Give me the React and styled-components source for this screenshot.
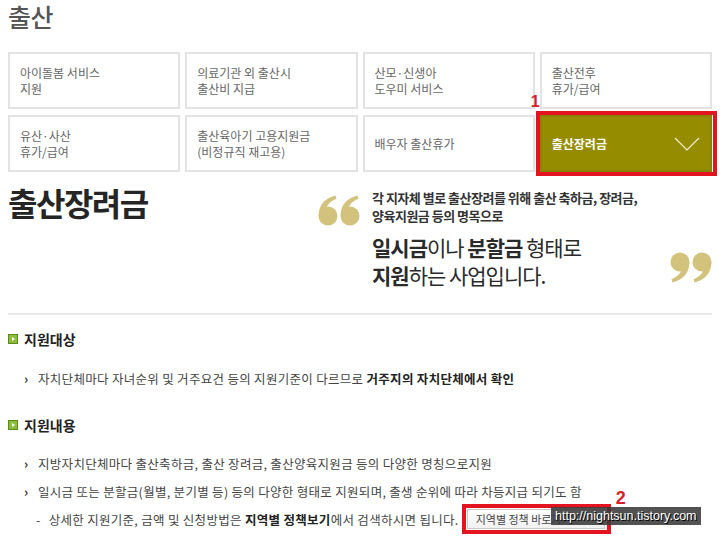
import React from 'react';
import styled, { createGlobalStyle } from 'styled-components';

const GlobalStyle = createGlobalStyle`
  html, body {
    margin: 0;
    padding: 0;
    background: #fff;
  }
  body {
    font-family: 'Noto Sans CJK KR', 'Noto Sans', sans-serif;
    color: #444;
  }
`;

const Page = styled.div`
  position: relative;
  width: 720px;
  height: 541px;
  overflow: hidden;
  padding: 0 8px;
  box-sizing: border-box;
`;

const PageTitle = styled.h1`
  margin: 0 0 20px 0;
  font-size: 25px;
  line-height: 32px;
  font-weight: 500;
  color: #555;
  letter-spacing: -0.5px;
`;

const MenuGrid = styled.div`
  display: grid;
  grid-template-columns: repeat(4, 1fr);
  grid-auto-rows: 57px;
  gap: 6px 5px;
`;

const MenuCard = styled.div`
  position: relative;
  box-sizing: border-box;
  border: 2px solid ${p => (p.active ? '#8a8300' : '#e3e3e3')};
  background: ${p => (p.active ? '#958c00' : '#fff')};
  color: ${p => (p.active ? '#fff' : '#666')};
  font-size: 12px;
  font-weight: ${p => (p.active ? 700 : 400)};
  line-height: 16px;
  padding: 0 10px;
  display: flex;
  align-items: center;
  justify-content: space-between;
`;

const Highlight = styled.div`
  position: absolute;
  inset: -6px -7px -6px -6px;
  border: 4px solid #e3141f;
  pointer-events: none;
`;

const Marker = styled.span`
  position: absolute;
  font-family: 'Liberation Sans', Arial, sans-serif;
  font-weight: 700;
  color: #d8202a;
  font-size: ${p => p.size || 16}px;
  line-height: 1;
  top: ${p => p.top}px;
  left: ${p => p.left}px;
`;

const Intro = styled.div`
  display: flex;
  margin-top: 10px;
  padding-bottom: 24px;
  border-bottom: 2px solid #e8e8e8;
`;

const BigTitle = styled.h2`
  width: 310px;
  flex: none;
  margin: 0;
  font-size: 32px;
  line-height: 40px;
  font-weight: 700;
  color: #252525;
  letter-spacing: -1.5px;
`;

const QuoteBlock = styled.div`
  flex: 1;
  display: flex;
  padding-top: 7px;
`;

const QuoteMark = styled.svg`
  flex: none;
  width: 42px;
  height: 31px;
  margin: ${p => (p.closing ? '63px 0 0 auto' : '6px 12px 0 0')};
  fill: #d2c27b;
`;

const QuoteText = styled.div`
  display: flex;
  flex-direction: column;
`;

const Lead = styled.p`
  margin: 0;
  font-size: 13px;
  line-height: 18px;
  font-weight: 700;
  color: #333;
  letter-spacing: -0.5px;
`;

const Statement = styled.p`
  margin: 8px 0 0 0;
  font-size: 21px;
  line-height: 28px;
  font-weight: 400;
  color: #2a2a2a;
  letter-spacing: -1px;

  b {
    font-weight: 700;
  }
`;

const Section = styled.section`
  margin-top: ${p => p.gap}px;
`;

const SectionHead = styled.h3`
  display: flex;
  align-items: center;
  gap: 6px;
  margin: 0;
  font-size: 14px;
  line-height: 20px;
  font-weight: 700;
  color: #222;
`;

const HeadIcon = styled.span`
  width: 10px;
  height: 10px;
  box-sizing: border-box;
  border: 1px solid #5d8a1c;
  background: #8cbc3c;
  position: relative;

  &::after {
    content: '';
    position: absolute;
    left: 3px;
    top: 2px;
    border-left: 3px solid #fff;
    border-top: 2px solid transparent;
    border-bottom: 2px solid transparent;
  }
`;

const BulletList = styled.ul`
  list-style: none;
  margin: ${p => p.top}px 0 0 0;
  padding: 0 0 0 16px;
`;

const Bullet = styled.li`
  display: flex;
  align-items: center;
  gap: 8px;
  height: 28px;
  font-size: 12.5px;
  color: #444;
  letter-spacing: 0.3px;
  padding-left: ${p => (p.sub ? '12px' : '0')};
  white-space: nowrap;

  b {
    color: #222;
    font-weight: 700;
  }
`;

const Arrow = styled.span`
  width: 6px;
  font-size: 13px;
  font-weight: 700;
  color: #333;
`;

const LinkButton = styled.span`
  position: relative;
  margin-left: 0;
  display: inline-flex;
  align-items: center;
  box-sizing: border-box;
  width: 138px;
  height: 20px;
  padding-left: 8px;
  border: 1px solid #c8c8c8;
  background: linear-gradient(#fff, #f1f1f1);
  font-size: 11px;
  letter-spacing: 0;
  color: #444;
`;

const Watermark = styled.div`
  position: absolute;
  left: 551px;
  top: 507px;
  padding: 0 4px;
  height: 18px;
  line-height: 18px;
  background: rgba(58, 58, 58, 0.88);
  color: #fff;
  font-family: 'Liberation Sans', Arial, sans-serif;
  font-size: 12.5px;
  text-shadow: 1px 1px 0 #000;
`;

const Chevron = () => (
  <svg width="26" height="14" viewBox="0 0 26 14">
    <polyline points="1,1 13,13 25,1" fill="none" stroke="#f3efc8" strokeWidth="1.2" />
  </svg>
);

// one "6" shaped comma: round body with a tail sweeping up to the right
const QuoteGlyph = ({ x }) => (
  <g transform={`translate(${x} 0)`}>
    <circle cx="10" cy="21" r="9.5" />
    <path d="M0.6 21 C0.6 10 7 3 17.5 0.5 L18.5 3.8 C12 6.5 9 10 8.5 14 L4 17 Z" />
  </g>
);

const Quote = ({ closing }) => (
  <QuoteMark closing={closing} viewBox="0 0 42 31" style={closing ? { transform: 'rotate(180deg)' } : undefined}>
    <QuoteGlyph x={0} />
    <QuoteGlyph x={22} />
  </QuoteMark>
);

const menus = [
  ['아이돌봄 서비스', '지원'],
  ['의료기관 외 출산시', '출산비 지급'],
  ['산모·신생아', '도우미 서비스'],
  ['출산전후', '휴가/급여'],
  ['유산·사산', '휴가/급여'],
  ['출산육아기 고용지원금', '(비정규직 재고용)'],
  ['배우자 출산휴가'],
];

export default function App() {
  return (
    <Page>
      <GlobalStyle />
      <PageTitle>출산</PageTitle>
      <MenuGrid>
        {menus.map((lines, idx) => (
          <MenuCard key={idx}>
            <div>
              {lines.map((l, i) => (
                <div key={i}>{l}</div>
              ))}
            </div>
          </MenuCard>
        ))}
        <MenuCard active>
          <span>출산장려금</span>
          <Chevron />
          <Highlight />
          <Marker top={-23} left={-11}>1</Marker>
        </MenuCard>
      </MenuGrid>

      <Intro>
        <BigTitle>출산장려금</BigTitle>
        <QuoteBlock>
          <Quote />
          <QuoteText>
            <Lead>각 지자체 별로 출산장려를 위해 출산 축하금, 장려금,</Lead>
            <Lead>양육지원금 등의 명목으로</Lead>
            <Statement>
              <b>일시금</b>이나 <b>분할금</b> 형태로
              <br />
              <b>지원</b>하는 사업입니다.
            </Statement>
          </QuoteText>
          <Quote closing />
        </QuoteBlock>
      </Intro>

      <Section gap={14}>
        <SectionHead>
          <HeadIcon />
          지원대상
        </SectionHead>
        <BulletList top={15}>
          <Bullet>
            <Arrow>›</Arrow>
            <span>
              자치단체마다 자녀순위 및 거주요건 등의 지원기준이 다르므로 <b>거주지의 자치단체에서 확인</b>
            </span>
          </Bullet>
        </BulletList>
      </Section>

      <Section gap={23}>
        <SectionHead>
          <HeadIcon />
          지원내용
        </SectionHead>
        <BulletList top={14}>
          <Bullet>
            <Arrow>›</Arrow>
            <span>지방자치단체마다 출산축하금, 출산 장려금, 출산양육지원금 등의 다양한 명칭으로지원</span>
          </Bullet>
          <Bullet>
            <Arrow>›</Arrow>
            <span>일시금 또는 분할금(월별, 분기별 등) 등의 다양한 형태로 지원되며, 출생 순위에 따라 차등지급 되기도 함</span>
          </Bullet>
          <Bullet sub>
            <span>-</span>
            <span>
              상세한 지원기준, 금액 및 신청방법은 <b>지역별 정책보기</b>에서 검색하시면 됩니다.
            </span>
            <LinkButton>
              지역별 정책 바로가기
              <Highlight />
              <Marker top={-21} left={148} size={18}>2</Marker>
            </LinkButton>
          </Bullet>
        </BulletList>
      </Section>

      <Watermark>http://nightsun.tistory.com</Watermark>
    </Page>
  );
}
